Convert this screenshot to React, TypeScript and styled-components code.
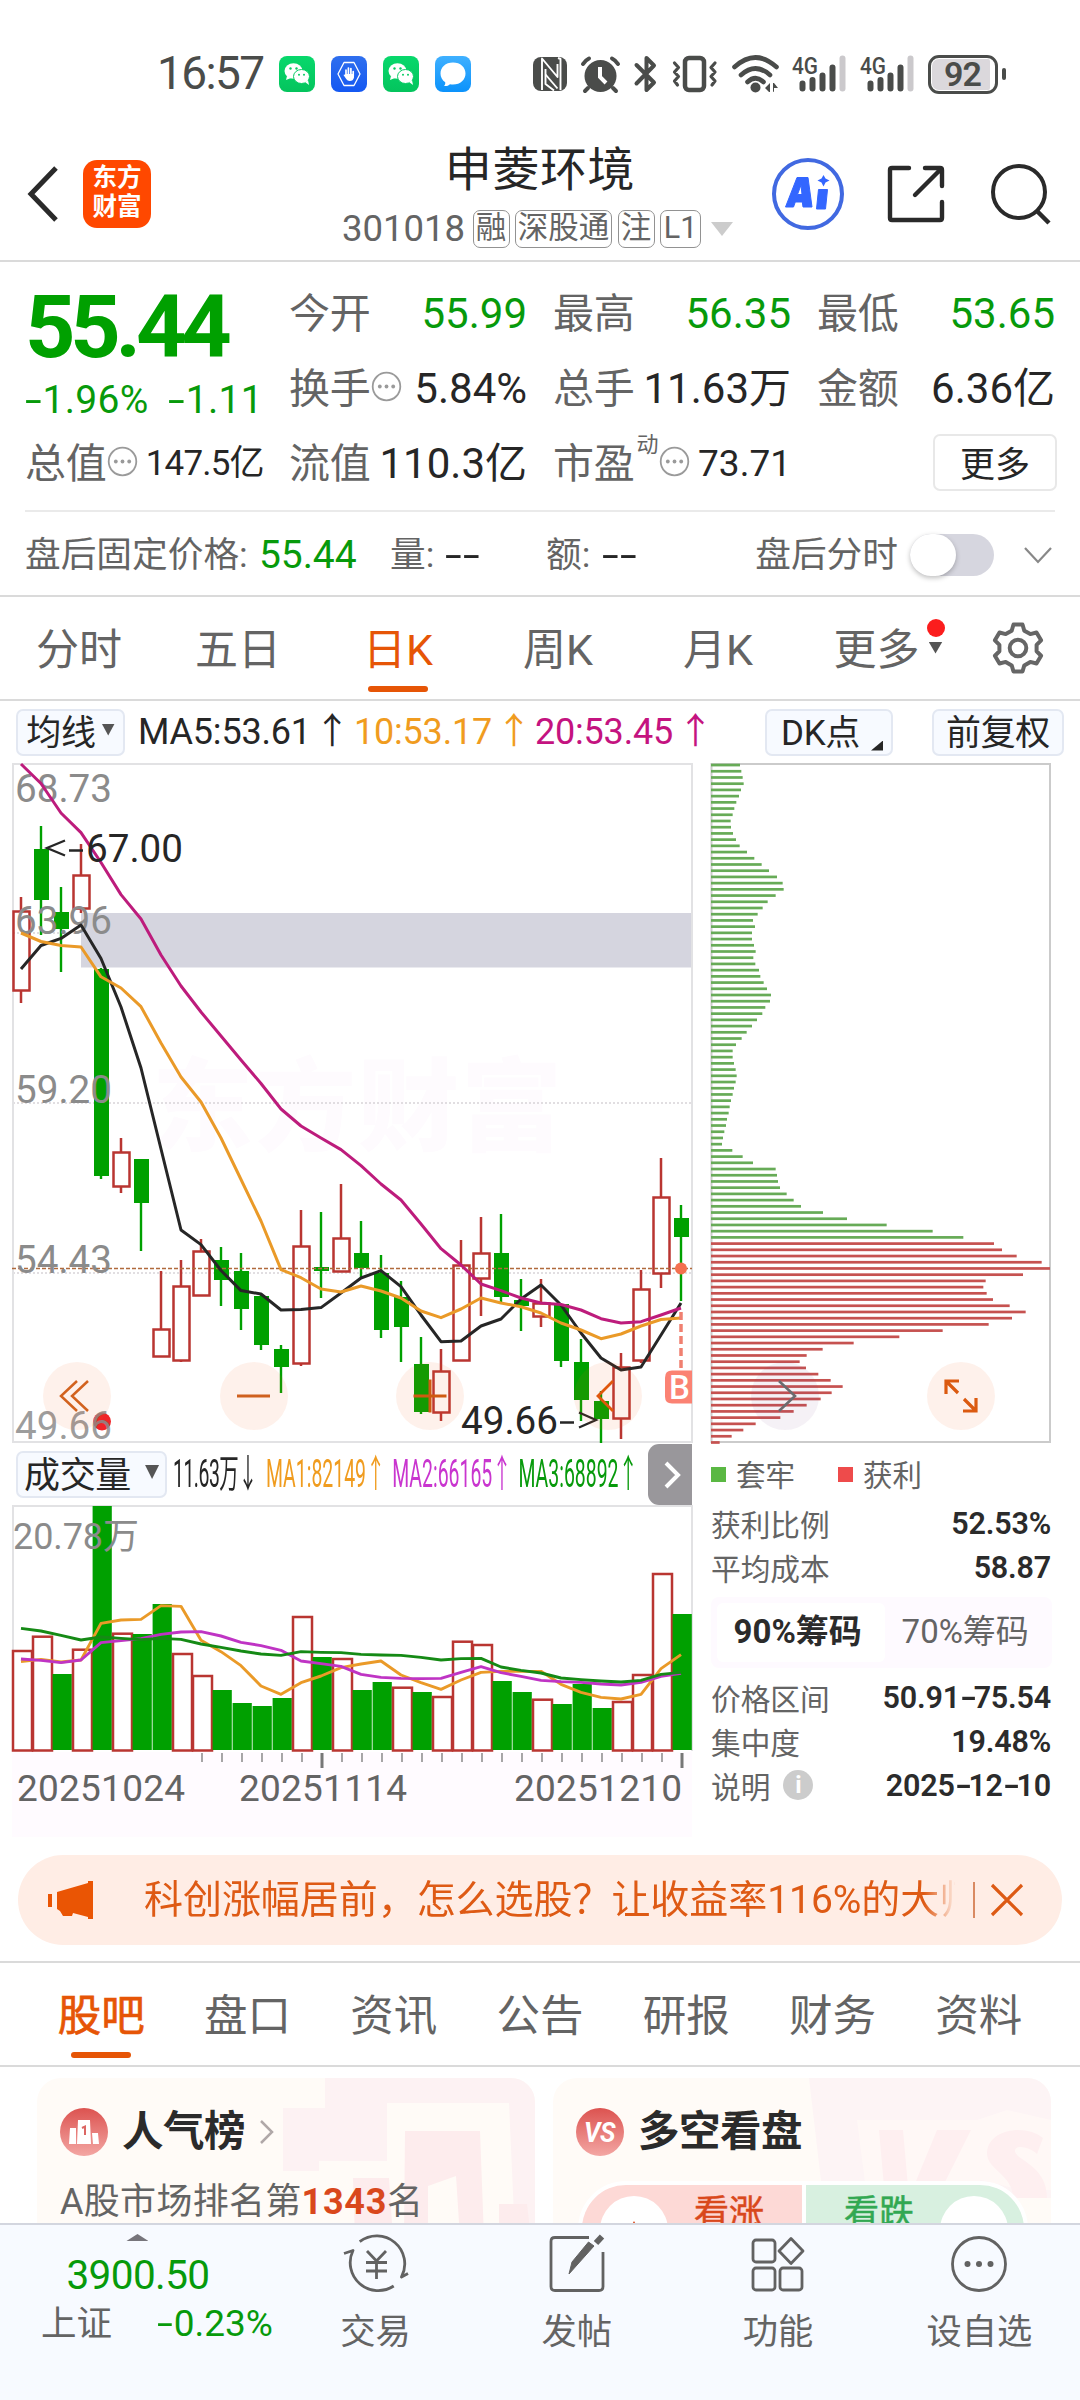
import React from "react";
import styled, { createGlobalStyle, css } from "styled-components";

const GREEN = "#079a0b";
const CANDLE_GREEN = "#00a000";
const CANDLE_RED = "#b93531";
const ORANGE = "#e65506";
const GRAY = "#646464";
const INK = "#262626";
const FONT = `Roboto, "Noto Sans CJK SC", sans-serif`;

const Global = createGlobalStyle`
  * { box-sizing: border-box; }
  body { margin: 0; background: #fff; }
  svg { display: block; flex: none; overflow: visible; }
`;

const Page = styled.main`
  width: 1080px;
  height: 2400px;
  overflow: hidden;
  display: flex;
  flex-direction: column;
  background: #fff;
  color: ${INK};
  font-family: ${FONT};
  white-space: nowrap;
`;

const Text = styled.span<{ $size: number; $color?: string; $weight?: number; $ls?: number; $ml?: number; $w?: number }>`
  flex: none;
  font-size: ${(p) => p.$size}px;
  line-height: 1.2;
  color: ${(p) => p.$color ?? INK};
  font-weight: ${(p) => p.$weight ?? 400};
  letter-spacing: ${(p) => p.$ls ?? 0}px;
  margin-left: ${(p) => p.$ml ?? 0}px;
  ${(p) => p.$w !== undefined && css`width: ${p.$w}px;`}
`;

/* a hyphen stretched to the width of a digit's minus sign */
const Dash = styled.span`
  display: inline-block;
  width: 0.45em;
  letter-spacing: 0;
  transform: scaleX(1.55);
  transform-origin: 0 50%;
`;

/* ---------- status bar ---------- */

const StatusBar = styled.div`
  height: 126px;
  flex: none;
  display: flex;
  align-items: center;
  padding: 22px 0 0 157px;
`;

const AppIcons = styled.div`
  display: flex;
  gap: 16px;
  margin-left: 10px;
`;

const AppIcon = styled.div<{ $bg: string }>`
  width: 36px;
  height: 36px;
  border-radius: 8px;
  background: ${(p) => p.$bg};
`;

const SystemIcons = styled.div`
  display: flex;
  align-items: center;
  margin-left: 62px;
`;

const SysSlot = styled.div<{ $ml: number }>`
  margin-left: ${(p) => p.$ml}px;
`;

const Battery = styled.div`
  width: 70px;
  height: 39px;
  margin-left: 14px;
  border: 3px solid #4a4c4a;
  border-radius: 11px;
  padding: 1px 5px 1px 1px;
  background: #fff;
`;

const BatteryFill = styled.div`
  height: 100%;
  border-radius: 7px 2px 2px 7px;
  background: #dbd8dc;
  display: flex;
  align-items: center;
  justify-content: center;
  padding-left: 3px;
`;

const BatteryTip = styled.div`
  width: 4px;
  height: 12px;
  margin-left: 4px;
  border-radius: 2px;
  background: #4a4c4a;
`;

const WeChat = () => (
  <AppIcon $bg="linear-gradient(#08d86c,#04c45d)">
    <svg width="36" height="36" viewBox="0 0 36 36">
      <ellipse cx="14.5" cy="15" rx="9" ry="7.8" fill="#fff" />
      <path d="M8 20l-1 4 5-2z" fill="#fff" />
      <ellipse cx="22.5" cy="20.5" rx="8" ry="7" fill="#fff" stroke="#06cc64" strokeWidth="1" />
      <path d="M26 26l4 3-1-5z" fill="#fff" />
      <g fill="#06cc64">
        <circle cx="11.5" cy="12.5" r="1.2" />
        <circle cx="17.5" cy="12.5" r="1.2" />
        <circle cx="20" cy="18.8" r="1" />
        <circle cx="25" cy="18.8" r="1" />
      </g>
    </svg>
  </AppIcon>
);

const HandApp = () => (
  <AppIcon $bg="linear-gradient(#2f6fee,#1458f2)">
    <svg width="36" height="36" viewBox="0 0 36 36">
      <path d="M13 6.500h10l6 11.500-6 11.500h-10L7 18z" fill="none" stroke="#fff" strokeWidth="1.300" strokeLinejoin="round" />
      <path d="M15 20v-6M17.400 19v-7M19.900 19v-6.500M22.200 20v-4.500" stroke="#fff" strokeWidth="1.700" strokeLinecap="round" />
      <path d="M14.200 18h8.800v3.500q-.8 3.500-4.300 3.500-2.300 0-3.500-2l-2.700-4q.7-1.200 2 .3z" fill="#fff" />
    </svg>
  </AppIcon>
);

const BubbleApp = () => (
  <AppIcon $bg="linear-gradient(#3fb0ff,#0b92fb)">
    <svg width="36" height="36" viewBox="0 0 36 36">
      <path d="M18 6.500c7.500 0 12.500 4.800 12.500 11S25.500 28.500 18 28.500c-1 0-2 0-3-.3-1.500 1.500-3.500 2-6 1.800 1-1 1.500-2.300 1.200-3.800C7 24 5.500 21 5.500 17.500c0-6.200 5-11 12.500-11z" fill="#fff" />
    </svg>
  </AppIcon>
);

const SYS = "#4a4c4a";

const Signal = () => (
  <svg width="54" height="38" viewBox="0 0 54 38">
    <text x="0" y="18.500" fontFamily="Roboto, sans-serif" fontSize="23.500" fontWeight="500" fill={SYS} textLength="26" lengthAdjust="spacingAndGlyphs">4G</text>
    <g stroke={SYS} strokeWidth="6" strokeLinecap="round">
      <path d="M10.500 28.500v5M20.500 25v8.500M30.500 20.500v13M40.500 12.500v21" />
      <path d="M50.500 3.500v30" stroke="#cbc9cc" />
    </g>
  </svg>
);

const StatusRow = () => (
  <StatusBar>
    <Text $size={46} $color={SYS} $ls={-1.6} $w={112}>16:57</Text>
    <AppIcons>
      <WeChat />
      <HandApp />
      <WeChat />
      <BubbleApp />
    </AppIcons>
    <SystemIcons>
      <svg width="34" height="34" viewBox="0 0 34 34">
        <rect width="34" height="34" rx="8" fill={SYS} />
        <path d="M9 33V1.500L24.500 20V7M12.500 12V27L21 33.500M27.500 33V2L25 1" stroke="#fff" strokeWidth="1.900" fill="none" strokeLinejoin="round" />
        <path d="M12.500 17.500l12 14" stroke="#fff" strokeWidth="1.900" />
      </svg>
      <SysSlot $ml={14}>
        <svg width="39" height="37" viewBox="0 0 39 37">
          <circle cx="19.500" cy="20" r="16" fill={SYS} />
          <path d="M2 8Q4 4.500 8 2.500M37 8q-2-3.500-6-5.500M7 32l-3 3M32 32l3 3" stroke={SYS} strokeWidth="4" strokeLinecap="round" fill="none" />
          <path d="M19 11v10l6 6" stroke="#fff" strokeWidth="4" fill="none" />
        </svg>
      </SysSlot>
      <SysSlot $ml={14}>
        <svg width="24" height="38" viewBox="0 0 24 38">
          <path d="M2.500 10L20 27.500 12.500 35V3L20 10.500 2.500 28.500" stroke={SYS} strokeWidth="4" fill="none" strokeLinecap="round" strokeLinejoin="round" />
        </svg>
      </SysSlot>
      <SysSlot $ml={14}>
        <svg width="46" height="38" viewBox="0 0 46 38">
          <rect x="13" y="3" width="19" height="32" rx="4" fill="none" stroke={SYS} strokeWidth="4.500" />
          <path d="M2.500 8l4 4.500-4 4.500 4 4.500-4 4.500 3 4M43 8l-4 4.500 4 4.500-4 4.500 4 4.500-3 4" fill="none" stroke={SYS} strokeWidth="3.200" strokeLinecap="round" strokeLinejoin="round" />
        </svg>
      </SysSlot>
      <SysSlot $ml={14}>
        <svg width="48" height="38" viewBox="0 0 48 38">
          <path d="M2.500 12q21-19 42 0M9 20q14.500-13 29 0M15.500 27q8-7.500 16 0" fill="none" stroke={SYS} strokeWidth="4.600" strokeLinecap="round" />
          <circle cx="23.500" cy="32.500" r="5" fill={SYS} />
          <path d="M38 28v9h-1l-4-4zM41 28v9l1-.5V33h4l-4-5z" fill={SYS} />
        </svg>
      </SysSlot>
      <SysSlot $ml={12}><Signal /></SysSlot>
      <SysSlot $ml={14}><Signal /></SysSlot>
      <Battery>
        <BatteryFill>
          <Text $size={34} $color={SYS} $weight={600} $ls={-1}>92</Text>
        </BatteryFill>
      </Battery>
      <BatteryTip />
    </SystemIcons>
  </StatusBar>
);

/* ---------- header ---------- */

const Header = styled.header`
  height: 136px;
  flex: none;
  display: flex;
  padding: 2px 29px 0 27px;
  border-bottom: 2px solid #dadada;
  align-items: center;
`;

const BrandLogo = styled.div`
  width: 68px;
  height: 68px;
  margin-left: 24px;
  border-radius: 14px;
  background: #ff4800;
  color: #fff;
  font-size: 24.500px;
  font-weight: 700;
  line-height: 29px;
  text-align: center;
  padding-top: 3px;
`;

const TitleBlock = styled.div`
  flex: 1;
  margin-left: 162px;
  height: 100%;
  padding-top: 11px;
`;

const Title = styled.h1`
  margin: 0;
  width: 454px;
  text-align: center;
  font-size: 47px;
  letter-spacing: 0.600px;
  line-height: 62px;
  font-weight: 400;
`;

const CodeRow = styled.div`
  display: flex;
  align-items: center;
  margin-top: 6px;
  padding-left: 29px;
`;

const Tag = styled.span<{ $w: number }>`
  width: ${(p) => p.$w}px;
  height: 38px;
  margin-left: 5.500px;
  border: 1.500px solid #929292;
  border-radius: 7px;
  color: ${GRAY};
  font-size: 30.500px;
  line-height: 34px;
  text-align: center;
`;

const Triangle = styled.i<{ $w: number; $h: number; $color: string; $ml?: number; $up?: boolean }>`
  flex: none;
  width: ${(p) => p.$w}px;
  height: ${(p) => p.$h}px;
  margin-left: ${(p) => p.$ml ?? 0}px;
  background: ${(p) => p.$color};
  clip-path: ${(p) => (p.$up ? "polygon(50% 0,100% 100%,0 100%)" : "polygon(0 0,100% 0,50% 100%)")};
`;

const HeaderIcons = styled.div`
  display: flex;
  align-items: center;
`;

const IconSlot = styled.div<{ $ml: number }>`
  margin-left: ${(p) => p.$ml}px;
`;

const TopHeader = () => (
  <Header>
    <svg width="32" height="58" viewBox="0 0 32 58">
      <path d="M29 3L4 29l25 26" fill="none" stroke="#2a2a2a" strokeWidth="5" />
    </svg>
    <BrandLogo>东方<br />财富</BrandLogo>
    <TitleBlock>
      <Title>申菱环境</Title>
      <CodeRow>
        <Text $size={36.5} $color={GRAY} $w={125}>301018</Text>
        <Tag $w={37}>融</Tag>
        <Tag $w={97}>深股通</Tag>
        <Tag $w={37}>注</Tag>
        <Tag $w={41}>L1</Tag>
        <Triangle $w={22} $h={14} $color="#ccc" $ml={10} />
      </CodeRow>
    </TitleBlock>
    <HeaderIcons>
      <svg width="72" height="72" viewBox="0 0 72 72">
        <circle cx="36" cy="36" r="34" fill="#fff" stroke="#4169e1" strokeWidth="4" />
        <path d="M13.500 49L25 19.500h11L40 49h-9l-.7-5h-7L21.500 49zM25.500 36.500h4.500L29 27z" fill="#3366ff" stroke="#3366ff" strokeLinejoin="round" />
        <path d="M46.500 31.500h9L53.500 51h-9z" fill="#3366ff" stroke="#3366ff" strokeLinejoin="round" />
        <path d="M51.500 17l2 3.500 4 2-4 2-2 4-2-4-4-2 4-2z" fill="#3366ff" />
      </svg>
      <IconSlot $ml={43}>
        <svg width="58" height="58" viewBox="0 0 58 58">
          <path d="M22 3H5Q3 3 3 5V53Q3 55 5 55H53Q55 55 55 53V37M38 3H53Q55 3 55 5V21M54 4L28 30" fill="none" stroke="#2a2a2a" strokeWidth="4.400" strokeLinecap="round" />
        </svg>
      </IconSlot>
      <IconSlot $ml={46}>
        <svg width="60" height="60" viewBox="0 0 60 60">
          <circle cx="28" cy="28" r="26" fill="none" stroke="#2a2a2a" strokeWidth="4" />
          <path d="M46 47l12 12" stroke="#2a2a2a" strokeWidth="4.500" />
        </svg>
      </IconSlot>
    </HeaderIcons>
  </Header>
);

/* ---------- quote ---------- */

const Quote = styled.section`
  flex: none;
  height: 250px;
  margin: 0 25px;
  padding-top: 14px;
  border-bottom: 2px solid #eaeaea;
  display: grid;
  grid-template-columns: repeat(4, 238px);
  grid-template-rows: repeat(3, 75px);
  column-gap: 26px;
`;

const PriceCell = styled.div`
  grid-row: span 2;
  display: flex;
  flex-direction: column;
`;

const Price = styled.div`
  height: 99px;
  line-height: 102px;
  font-size: 88px;
  font-weight: 700;
  letter-spacing: -5.200px;
  color: ${CANDLE_GREEN};
`;

const ChangeRow = styled.div`
  height: 54px;
  display: flex;
  align-items: center;
  justify-content: space-between;
`;

const Cell = styled.div`
  display: flex;
  align-items: center;
  color: ${GRAY};
  font-size: 41px;
  letter-spacing: -0.300px;
  line-height: 50px;
`;

const CellValue = styled.span<{ $color?: string; $size?: number; $ls?: number }>`
  margin-left: auto;
  color: ${(p) => p.$color ?? INK};
  font-size: ${(p) => p.$size ?? 42}px;
  letter-spacing: ${(p) => p.$ls ?? 0}px;
  margin-right: ${(p) => p.$ls ?? 0}px;
`;

const Sup = styled.span`
  align-self: flex-start;
  margin-left: 2px;
  font-size: 22px;
  line-height: 26px;
  padding-top: 6px;
`;

const MoreButton = styled.button`
  justify-self: end;
  align-self: center;
  width: 124px;
  height: 57px;
  margin: -3px -2px 0 0;
  padding: 0 0 7px;
  border: 2px solid #e8e8e8;
  border-radius: 7px;
  background: #fff;
  color: ${INK};
  font: 35px ${FONT};
`;

const HintBox = styled.span`
  margin: -5px 0 0 1px;
`;

const Hint = () => (
  <HintBox>
    <svg width="31" height="31" viewBox="0 0 31 31">
      <circle cx="15.500" cy="15.500" r="13.800" fill="none" stroke="#9a9a9a" strokeWidth="1.800" />
      <g fill="#9a9a9a">
        <circle cx="8.800" cy="15.500" r="1.900" />
        <circle cx="15.500" cy="15.500" r="1.900" />
        <circle cx="22.200" cy="15.500" r="1.900" />
      </g>
    </svg>
  </HintBox>
);

const QuotePanel = () => (
  <Quote>
    <PriceCell>
      <Price>55.44</Price>
      <ChangeRow>
        <Text $size={39} $color={GREEN} $ls={0.3}><Dash>-</Dash>1.96%</Text>
        <Text $size={39} $color={GREEN} $ls={0.3}><Dash>-</Dash>1.11</Text>
      </ChangeRow>
    </PriceCell>
    <Cell>今开<CellValue $color={GREEN}>55.99</CellValue></Cell>
    <Cell>最高<CellValue $color={GREEN}>56.35</CellValue></Cell>
    <Cell>最低<CellValue $color={GREEN}>53.65</CellValue></Cell>
    <Cell>换手<Hint /><CellValue>5.84%</CellValue></Cell>
    <Cell>总手<CellValue>11.63万</CellValue></Cell>
    <Cell>金额<CellValue>6.36亿</CellValue></Cell>
    <Cell>总值<Hint /><CellValue $size={35} $ls={-0.8}>147.5亿</CellValue></Cell>
    <Cell>流值<CellValue>110.3亿</CellValue></Cell>
    <Cell>市盈<Sup>动</Sup><Hint /><CellValue $size={37}>73.71</CellValue></Cell>
    <MoreButton>更多</MoreButton>
  </Quote>
);

const AfterHours = styled.section`
  flex: none;
  height: 85px;
  padding: 3px 28px 0 25px;
  display: flex;
  align-items: center;
  border-bottom: 2px solid #dadada;
`;

const Switch = styled.div`
  width: 84px;
  height: 42px;
  margin-left: 12px;
  border-radius: 21px;
  background: #d6d6df;
`;

const Knob = styled.div`
  width: 46px;
  height: 42px;
  border-radius: 23px;
  background: #fff;
  box-shadow: 0 2px 5px rgba(0, 0, 0, 0.25);
`;

const Spacer = styled.div`
  flex: 1;
`;

const AfterHoursRow = () => (
  <AfterHours>
    <Text $size={35.7} $color={GRAY} $w={234}>盘后固定价格:</Text>
    <Text $size={39} $color={GREEN} $ls={-0.1} $w={131}>55.44</Text>
    <Text $size={35.7} $color={GRAY} $w={55}>量:</Text>
    <Text $size={39} $w={101}><Dash>-</Dash><Dash>-</Dash></Text>
    <Text $size={35.7} $color={GRAY} $w={56}>额:</Text>
    <Text $size={39}><Dash>-</Dash><Dash>-</Dash></Text>
    <Spacer />
    <Text $size={35.7} $color={GRAY}>盘后分时</Text>
    <Switch><Knob /></Switch>
    <IconSlot $ml={30}>
      <svg width="28" height="18" viewBox="0 0 28 18">
        <path d="M1 2l13 14L27 2" fill="none" stroke="#888" strokeWidth="2.200" />
      </svg>
    </IconSlot>
  </AfterHours>
);

/* ---------- period tabs ---------- */

const PeriodTabs = styled.nav`
  flex: none;
  height: 104px;
  padding: 0 36px 0 0;
  display: flex;
  align-items: center;
  border-bottom: 2px solid #dadada;
`;

const PeriodTab = styled.div<{ $active?: boolean; $w: number }>`
  position: relative;
  width: ${(p) => p.$w}px;
  height: 100%;
  padding-bottom: 5px;
  display: flex;
  align-items: center;
  justify-content: center;
  font-size: 43px;
  color: ${(p) => (p.$active ? ORANGE : GRAY)};
  ${(p) => p.$active && css`
    &::after {
      content: "";
      position: absolute;
      left: 50%;
      bottom: 7px;
      width: 60px;
      margin-left: -30px;
      height: 6px;
      border-radius: 3px;
      background: ${ORANGE};
    }
  `}
`;

const MoreMark = styled.span`
  display: flex;
  flex-direction: column;
  align-items: center;
  gap: 5px;
  margin: -19px 0 0 7px;
`;

const RedDot = styled.i`
  width: 18px;
  height: 18px;
  border-radius: 9px;
  background: #fb1d1d;
`;

const GearSlot = styled.div`
  margin-left: auto;
`;

const Gear = () => (
  <GearSlot>
    <svg width="52" height="52" viewBox="0 0 52 52">
      <path d="M21.500 2.500h9l1.800 6.200 6 3.400 6.200-1.600 4.600 7.800-4.500 4.500v6.500l4.500 4.400-4.600 7.800-6.200-1.600-6 3.500-1.800 6.100h-9l-1.800-6.100-6-3.500-6.200 1.600L2.900 33.700l4.500-4.400v-6.500l-4.500-4.500 4.600-7.800 6.200 1.600 6-3.400z" fill="none" stroke="#666" strokeWidth="4" strokeLinejoin="round" />
      <circle cx="26" cy="26" r="8.300" fill="none" stroke="#666" strokeWidth="4" />
    </svg>
  </GearSlot>
);

const Periods = () => (
  <PeriodTabs>
    <PeriodTab $w={158}>分时</PeriodTab>
    <PeriodTab $w={160}>五日</PeriodTab>
    <PeriodTab $w={160} $active>日K</PeriodTab>
    <PeriodTab $w={160}>周K</PeriodTab>
    <PeriodTab $w={160}>月K</PeriodTab>
    <PeriodTab $w={182}>
      更多
      <MoreMark>
        <RedDot />
        <Triangle $w={14} $h={12} $color="#555" />
      </MoreMark>
    </PeriodTab>
    <Gear />
  </PeriodTabs>
);

/* ---------- moving average bar ---------- */

const MaBar = styled.div`
  flex: none;
  height: 62px;
  padding: 0 16px;
  display: flex;
  align-items: center;
`;

const Chip = styled.button<{ $w: number; $ml?: number; $size?: number }>`
  flex: none;
  width: ${(p) => p.$w}px;
  height: 47px;
  margin-left: ${(p) => p.$ml ?? 0}px;
  padding: 0 0 5px;
  display: flex;
  align-items: center;
  justify-content: center;
  border: 2px solid #e3e8f2;
  border-radius: 7px;
  background: #f7faff;
  color: ${INK};
  font: ${(p) => p.$size ?? 35}px ${FONT};
  letter-spacing: -0.300px;
`;

const Corner = styled.i`
  align-self: flex-end;
  width: 12px;
  height: 10px;
  margin: 0 -6px -2px 11px;
  background: ${INK};
  clip-path: polygon(100% 0, 100% 100%, 0 100%);
`;

const Arrow = styled.span<{ $w?: number }>`
  display: inline-block;
  width: ${(p) => p.$w ?? 40}px;
  text-align: center;
  letter-spacing: 0;
  font-family: "Noto Sans CJK SC", sans-serif;
  line-height: 1;
`;

const MaLegend = () => (
  <MaBar>
    <Chip $w={109}>均线<Triangle $w={13} $h={12} $color="#555" $ml={6} /></Chip>
    <Text $size={36} $w={216} $ml={13} $ls={-0.2}>MA5:53.61<Arrow $w={43}>↑</Arrow></Text>
    <Text $size={36} $color="#f09c1f" $w={181} $ls={-0.2}>10:53.17<Arrow $w={44}>↑</Arrow></Text>
    <Text $size={36} $color="#c41380" $w={181} $ls={-0.2}>20:53.45<Arrow $w={45}>↑</Arrow></Text>
    <Spacer />
    <Chip $w={128}>DK点<Corner /></Chip>
    <Chip $w={132} $ml={39}>前复权</Chip>
  </MaBar>
);

/* ---------- charts ---------- */

const ChartArea = styled.section`
  flex: none;
  height: 1074px;
  padding-left: 12px;
  display: flex;
  gap: 17px;
`;

const ChartColumn = styled.div`
  width: 682px;
  position: relative;
`;

const SideColumn = styled.div`
  width: 341px;
  position: relative;
`;

const ToolButton = styled.button<{ $cx: number; $gray?: boolean }>`
  position: absolute;
  top: 599px;
  left: ${(p) => p.$cx - 34}px;
  width: 68px;
  height: 68px;
  padding: 0;
  display: flex;
  align-items: center;
  justify-content: center;
  border: 0;
  border-radius: 34px;
  background: ${(p) => (p.$gray ? "rgba(120,70,140,0.075)" : "rgba(240,90,20,0.085)")};
`;

// x position comes from the index; [high, bodyTop, bodyBottom, low, rising]
const CANDLES: [number, number, number, number, number][] = [
  [897, 911, 990, 1003, 1], [826, 849, 900, 935, 0], [887, 912, 929, 972, 0], [844, 875, 908, 913, 1],
  [968, 969, 1176, 1179, 0], [1138, 1152, 1186, 1193, 1], [1159, 1159, 1203, 1251, 0], [1271, 1329, 1356, 1356, 1],
  [1260, 1286, 1360, 1362, 1], [1239, 1251, 1295, 1295, 1], [1247, 1260, 1280, 1306, 0], [1253, 1271, 1309, 1330, 0],
  [1295, 1296, 1345, 1350, 0], [1345, 1349, 1367, 1393, 0], [1210, 1246, 1363, 1366, 1], [1212, 1267, 1271, 1298, 0],
  [1184, 1238, 1271, 1271, 1], [1221, 1253, 1268, 1278, 0], [1255, 1273, 1330, 1338, 0], [1281, 1297, 1327, 1362, 0],
  [1337, 1364, 1412, 1414, 0], [1349, 1371, 1412, 1421, 1], [1240, 1265, 1360, 1360, 1], [1217, 1253, 1278, 1316, 1],
  [1214, 1253, 1297, 1302, 0], [1279, 1300, 1306, 1331, 0], [1279, 1303, 1316, 1327, 1], [1304, 1304, 1361, 1367, 0],
  [1339, 1362, 1400, 1421, 0], [1391, 1401, 1419, 1443, 0], [1353, 1367, 1418, 1439, 1], [1270, 1289, 1360, 1363, 1],
  [1158, 1197, 1273, 1288, 1], [1205, 1218, 1237, 1301, 0],
];
const MA5 = [969, 945.5, 938.4, 925, 958.5, 1007, 1068, 1149, 1230, 1244.6, 1270.5, 1290.6, 1294, 1310, 1309.5, 1307.6, 1293, 1278, 1270.7, 1286.7, 1315, 1341.7, 1341, 1326, 1319, 1299, 1285, 1305, 1333, 1358, 1370, 1367, 1335, 1303];
const MA10 = [933, 941.5, 945.5, 947, 976.8, 988, 1006.7, 1043, 1077, 1102, 1138, 1179.5, 1221, 1269.6, 1277.7, 1289, 1292, 1286, 1291, 1298, 1311, 1317.7, 1309, 1298, 1303, 1306.7, 1313, 1323, 1330, 1338.7, 1334, 1326, 1319.5, 1318];
const MA20 = [764, 783.5, 813, 832.6, 862.5, 894.6, 919, 955, 986, 1012, 1036, 1060, 1083.5, 1109, 1126, 1138, 1149.6, 1165.7, 1184, 1200, 1224, 1248.7, 1265, 1284, 1290.7, 1298, 1303, 1304.5, 1310, 1318.7, 1323, 1321.7, 1315, 1308];

const xAt = (i: number) => 21 + i * 20;
const line = (v: number[]) => v.map((y, i) => `${xAt(i)},${y}`).join(" ");
const LABELS: [string, number][] = [["68.73", 802], ["63.96", 934], ["59.20", 1103], ["54.43", 1273]];

const CandleChart = () => (
  <svg width="682" height="681" viewBox="12 763 682 681">
    <text x="152" y="1143" fontFamily={FONT} fontSize="101" fontWeight="900" fill="#fefbfe" textLength="410">东方财富</text>
    <g stroke="#d8d4d8" strokeWidth="1.300" strokeDasharray="2 2">
      <path d="M13 933H692M13 1103H692M13 1273H692" />
    </g>
    <rect x="81" y="913" width="611" height="54.500" fill="#d5d5df" />
    <rect x="13" y="764" width="679" height="678" fill="none" stroke="#e2e2e4" strokeWidth="2" />
    {CANDLES.map(([hi, top, bottom, low, up], i) => {
      const x = xAt(i);
      return up ? (
        <g key={i} stroke={CANDLE_RED} strokeWidth="2.500" fill="none">
          <path d={`M${x} ${hi}V${top}M${x} ${bottom}V${low}`} />
          <rect x={x - 7.5} y={top + 0.5} width="16" height={bottom - top} />
        </g>
      ) : (
        <g key={i} fill={CANDLE_GREEN}>
          <rect x={x - 1.2} y={hi} width="2.400" height={low - hi} />
          <rect x={x - 7} y={top} width="15" height={bottom - top} />
        </g>
      );
    })}
    <path d="M12 1268.500H692" stroke="#b06a3c" strokeWidth="1.300" strokeDasharray="4 2" />
    <g fontFamily={FONT} fontSize="39" fill="#8b8b8b">
      {LABELS.map(([t, y]) => (
        <text key={t} x="15" y={y} textLength="97" lengthAdjust="spacingAndGlyphs">{t}</text>
      ))}
    </g>
    <g fill="none" strokeWidth="3" strokeLinejoin="round">
      <polyline points={line(MA5)} stroke="#262626" />
      <polyline points={line(MA10)} stroke="#ea9a28" />
      <polyline points={line(MA20)} stroke="#bd1c7c" />
    </g>
    <g fontFamily={FONT} fontSize="39" fill={INK}>
      <text x="86" y="861.500" textLength="97" lengthAdjust="spacingAndGlyphs">67.00</text>
      <text x="461" y="1434" textLength="97" lengthAdjust="spacingAndGlyphs">49.66</text>
    </g>
    <g stroke={INK} strokeWidth="2.300" fill="none">
      <path d="M65 840.500L47 848l18 7.500M69 850.500h14" />
      <path d="M560 1422.500h14M579 1412.500l17 7.500-17 7.500" />
    </g>
    <path d="M681 1312v56" stroke="#f08070" strokeWidth="3.500" strokeDasharray="8 4" />
    <circle cx="681" cy="1268.500" r="6" fill="#f4704f" />
    <path d="M692 1370.500h-20q-7 0-7 7v19q0 7 7 7h20z" fill="#fb8273" />
    <text x="669" y="1399" fontFamily={FONT} fontSize="33" fontWeight="500" fill="#fff">B</text>
    <circle cx="102" cy="1421.500" r="9" fill="#f02428" />
    <text x="15" y="1438.500" fontFamily={FONT} fontSize="39" fill="#8b8b8b" fillOpacity="0.85" textLength="97" lengthAdjust="spacingAndGlyphs">49.66</text>
  </svg>
);

const CHIPS = [
  150, 154, 158, 161, 153, 147, 139, 133, 128, 122, 123, 129, 138, 149, 171, 193, 215, 237, 261, 278, 281, 257, 233, 218, 203, 189, 195, 186, 186, 192,
  197, 190, 196, 207, 211, 221, 231, 243, 240, 226, 217, 201, 186, 170, 155, 138, 128, 128, 132, 137, 140, 137, 132, 128, 123, 119, 116, 111, 108, 103,
  99, 96, 127, 158, 189, 257, 261, 264, 270, 290, 311, 333, 399, 471, 590, 728, 820, 912, 936, 980, 1055, 1080, 999, 887, 880, 890, 909, 959, 1007, 966,
  896, 758, 628, 491, 398, 350, 329, 348, 385, 422, 458, 425, 392, 350, 311, 271, 197, 160, 125, 89,
];
const FIRST_PROFIT = 77;

const ChipChart = () => (
  <svg width="341" height="681" viewBox="711 763 341 681">
    <rect x="711.500" y="764" width="338.500" height="678" fill="none" stroke="#cbcbcb" strokeWidth="2" />
    {CHIPS.map((w, i) => (
      <rect key={i} x="711" y={763.7 + i * 6.215} width={(w - 63) / 3} height="2.700" fill={i < FIRST_PROFIT ? "#67ab57" : "#c65250"} />
    ))}
  </svg>
);

const VolumeHeader = styled.div`
  height: 61px;
  display: flex;
  align-items: center;
  padding-left: 4px;
`;

const VolumeStats = styled.div`
  width: 474px;
  margin-left: 6px;
`;

const Condensed = styled.div`
  width: 940px;
  display: flex;
  transform: scaleX(0.505);
  transform-origin: 0 50%;
`;

const NextButton = styled.button`
  width: 44px;
  height: 61px;
  margin-left: auto;
  margin-right: 2px;
  padding: 0 0 0 14px;
  border: 0;
  border-radius: 11px 0 0 11px;
  background: #99979b;
`;

const VOLUMES: [number, number][] = [
  [1650, 1], [1635.7, 1], [1674, 0], [1648.7, 1], [1506, 0], [1632.7, 1], [1634, 0], [1604, 0], [1653, 1], [1675, 1], [1690, 0], [1703, 0],
  [1706, 0], [1698, 0], [1616, 1], [1657, 0], [1658, 1], [1690, 0], [1682, 0], [1686.7, 1], [1692, 0], [1696, 1], [1640.7, 1], [1644, 1],
  [1681, 0], [1692, 0], [1698.7, 1], [1704, 0], [1684, 0], [1708, 0], [1701, 1], [1674, 1], [1573, 1], [1614, 0],
];
const V1 = [695, 688, 696, 690, 580, 570, 568, 527, 529, 631, 665, 707, 768, 793, 758, 738, 713, 702, 693, 735, 758, 778, 750, 727, 724, 724, 724, 763, 787, 802, 807, 793, 716, 674];
const V2 = [687, 691, 698, 690, 638, 632, 626, 613, 606, 605, 618, 637, 647, 661, 693, 701, 709, 733, 742, 745, 746, 745, 727, 710, 728, 739, 751, 755, 757, 762, 765, 757, 739, 730];
const V3 = [595, 603, 616, 630, 621, 625, 629, 625, 628, 642, 652, 663, 672, 676, 665, 667, 668, 673, 675, 676, 682, 690, 686, 685, 711, 721, 729, 744, 749, 753, 756, 751, 733, 727];
const volLine = (v: number[]) => line(v.map((n) => 1430 + n / 3));

const VolumeChart = () => (
  <svg width="682" height="332" viewBox="12 1505 682 332">
    <rect x="12" y="1752" width="680" height="85" fill="#fffbff" />
    <path d="M13 1751V1506H692V1751" fill="none" stroke="#e2e2e4" strokeWidth="2" />
    {VOLUMES.map(([y, up], i) => {
      const x = xAt(i) - 9;
      return up ? (
        <rect key={i} x={x + 1} y={y + 1} width="19" height={1749.5 - y} fill="#fff" stroke={CANDLE_RED} strokeWidth="2.500" />
      ) : (
        <rect key={i} x={x + 0.6} y={y} width="19.200" height={1750 - y} fill={CANDLE_GREEN} />
      );
    })}
    <text x="13" y="1549" fontFamily={FONT} fontSize="36" fill="#8b8b8b" textLength="126">20.78万</text>
    <g fill="none" strokeWidth="2.900" strokeLinejoin="round">
      <polyline points={volLine(V1)} stroke="#ea9a28" />
      <polyline points={volLine(V2)} stroke="#bf34c4" />
      <polyline points={volLine(V3)} stroke="#158a15" />
    </g>
    {Array.from({ length: 25 }, (_, i) => {
      const major = i === 6 || i === 24;
      return <path key={i} d={`M${202 + i * 20} 1753V${major ? 1768 : 1762}`} stroke="#777" strokeWidth={major ? 3 : 1.3} />;
    })}
    <g fontFamily={FONT} fontSize="37" fill={GRAY}>
      <text x="17" y="1801" textLength="168">20251024</text>
      <text x="239" y="1801" textLength="168">20251114</text>
      <text x="514" y="1801" textLength="168">20251210</text>
    </g>
  </svg>
);

const Legend = styled.div`
  height: 57px;
  display: flex;
  align-items: center;
  color: ${GRAY};
  font-size: 29.500px;
`;

const Swatch = styled.i<{ $color: string; $ml?: number }>`
  width: 15px;
  height: 15px;
  margin: 3px 10px 0 ${(p) => p.$ml ?? 0}px;
  background: ${(p) => p.$color};
`;

const InfoRow = styled.div`
  height: 44px;
  display: flex;
  align-items: center;
  justify-content: space-between;
  color: ${GRAY};
  font-size: 29.700px;
`;

const InfoLabel = styled.span`
  display: flex;
  align-items: center;
  gap: 13px;
`;

const InfoValue = styled.span`
  font-weight: 600;
  font-size: 30.500px;
  letter-spacing: -0.200px;
  margin-right: 1px;
  color: #2b2b2b;
`;

const InfoIcon = styled.i`
  width: 30px;
  height: 30px;
  border-radius: 15px;
  background: #ccc;
  color: #fff;
  font-style: normal;
  font-weight: 700;
  font-size: 24px;
  line-height: 30px;
  text-align: center;
`;

const Segments = styled.div`
  height: 71px;
  margin: 8px 0 7px;
  padding: 6px;
  display: flex;
  border-radius: 8px;
  background: #fefaff;
`;

const Segment = styled.div<{ $on?: boolean }>`
  flex: 1;
  border-radius: 6px;
  background: ${(p) => (p.$on ? "#fff" : "transparent")};
  color: ${(p) => (p.$on ? "#2b2b2b" : GRAY)};
  font-weight: ${(p) => (p.$on ? 700 : 400)};
  font-size: 33px;
  line-height: 58px;
  text-align: center;
  padding-right: ${(p) => (p.$on ? 6 : 0)}px;
`;

const Charts = () => (
  <ChartArea>
    <ChartColumn>
      <CandleChart />
      <ToolButton $cx={64.7}>
        <svg width="32" height="34" viewBox="0 0 32 34"><path d="M16 2L0 17l16 15M27 2L11 17l16 15" fill="none" stroke="#d2621e" strokeWidth="2.500" /></svg>
      </ToolButton>
      <ToolButton $cx={241.6}>
        <svg width="33" height="4" viewBox="0 0 33 4"><path d="M0 2h33" stroke="#cf611f" strokeWidth="3" /></svg>
      </ToolButton>
      <ToolButton $cx={418.3}>
        <svg width="34" height="34" viewBox="0 0 34 34"><path d="M0.500 17h33M17 .5v33" stroke="#cf5a10" strokeWidth="3" /></svg>
      </ToolButton>
      <ToolButton $cx={596}>
        <svg width="34" height="34" viewBox="0 0 34 34"><path d="M22 2L7 17l15 15" fill="none" stroke="#e0570c" strokeWidth="2.800" /></svg>
      </ToolButton>
      <VolumeHeader>
        <Chip $w={151} $size={36}>成交量<Triangle $w={14} $h={14} $color="#555" $ml={14} /></Chip>
        <VolumeStats>
          <Condensed>
            <Text $size={38.5} $w={184} $ls={-1}>11.63万<Arrow $w={36}>↓</Arrow></Text>
            <Text $size={38.5} $color="#f09c1f" $w={250}>MA1:82149<Arrow $w={38}>↑</Arrow></Text>
            <Text $size={38.5} $color="#c935cf" $w={250}>MA2:66165<Arrow $w={38}>↑</Arrow></Text>
            <Text $size={38.5} $color={GREEN}>MA3:68892<Arrow $w={38}>↑</Arrow></Text>
          </Condensed>
        </VolumeStats>
        <NextButton>
          <svg width="20" height="30" viewBox="0 0 20 30"><path d="M4 3l12 12L4 27" fill="none" stroke="#fff" strokeWidth="4" /></svg>
        </NextButton>
      </VolumeHeader>
      <VolumeChart />
    </ChartColumn>
    <SideColumn>
      <ChipChart />
      <ToolButton $cx={73.7} $gray>
        <svg width="34" height="32" viewBox="0 0 34 32"><path d="M11 1l16 15-16 15" fill="none" stroke="#6b6b6f" strokeWidth="2.600" /></svg>
      </ToolButton>
      <ToolButton $cx={250.3}>
        <svg width="34" height="34" viewBox="0 0 34 34"><path d="M15 2H2v13M2 2l12 12M19 32h13V19M32 32L20 20" fill="none" stroke="#db5a10" strokeWidth="3.200" /></svg>
      </ToolButton>
      <Legend>
        <Swatch $color="#5ab843" />套牢
        <Swatch $color="#ee4b4b" $ml={43} />获利
      </Legend>
      <InfoRow>获利比例<InfoValue>52.53%</InfoValue></InfoRow>
      <InfoRow>平均成本<InfoValue>58.87</InfoValue></InfoRow>
      <Segments>
        <Segment $on>90%筹码</Segment>
        <Segment>70%筹码</Segment>
      </Segments>
      <InfoRow>价格区间<InfoValue>50.91<Dash>-</Dash>75.54</InfoValue></InfoRow>
      <InfoRow>集中度<InfoValue>19.48%</InfoValue></InfoRow>
      <InfoRow><InfoLabel>说明<InfoIcon>i</InfoIcon></InfoLabel><InfoValue>2025<Dash>-</Dash>12<Dash>-</Dash>10</InfoValue></InfoRow>
    </SideColumn>
  </ChartArea>
);

/* ---------- banner ---------- */

const Banner = styled.div`
  flex: none;
  height: 90px;
  margin: 18px 18px 16px;
  padding: 0 38px 0 29px;
  display: flex;
  align-items: center;
  border-radius: 45px;
  background: #ffede5;
`;

const BannerText = styled.div`
  width: 812px;
  margin-left: 49px;
  overflow: hidden;
  font-size: 39px;
  letter-spacing: -0.050px;
  line-height: 60px;
  padding-bottom: 1px;
  color: #de5a14;
  mask-image: linear-gradient(90deg, #000 780px, transparent 812px);
`;

const BannerRule = styled.i`
  width: 2px;
  height: 36px;
  margin: 0 15px 0 18px;
  background: #d98a62;
`;

const BannerRow = () => (
  <Banner>
    <svg width="48" height="40" viewBox="0 0 48 40">
      <path d="M1 14h4v13H1zM10 12L41 3V1h5v38h-5v-2l-15-4-1 3H16l-3-5-3-2z" fill="#ea5504" />
    </svg>
    <BannerText>科创涨幅居前，怎么选股？让收益率116%的大师</BannerText>
    <BannerRule />
    <svg width="34" height="34" viewBox="0 0 34 34"><path d="M2 2l30 30M32 2L2 32" stroke="#dd5a14" strokeWidth="3.200" /></svg>
  </Banner>
);

/* ---------- section tabs and cards ---------- */

const SectionTabs = styled.nav`
  flex: none;
  height: 106px;
  padding: 0 28px;
  display: grid;
  grid-template-columns: repeat(7, 1fr);
  border-top: 2px solid #dadada;
  border-bottom: 2px solid #dadada;
`;

const SectionTab = styled.div<{ $active?: boolean }>`
  display: flex;
  flex-direction: column;
  align-items: center;
  padding-top: 23px;
  font-size: 43.500px;
  line-height: 62px;
  -webkit-text-stroke: ${(p) => (p.$active ? `0.7px ${ORANGE}` : "0")};
  color: ${(p) => (p.$active ? ORANGE : GRAY)};
  &::after {
    content: "";
    width: 60px;
    height: 6px;
    margin-top: 4px;
    border-radius: 3px;
    background: ${(p) => (p.$active ? ORANGE : "transparent")};
  }
`;

const Cards = styled.section`
  flex: none;
  height: 156px;
  padding: 11px 29px 0 37px;
  display: grid;
  grid-template-columns: 1fr 1fr;
  gap: 18px;
  overflow: hidden;
`;

const Card = styled.article`
  position: relative;
  height: 180px;
  overflow: hidden;
  border-radius: 24px;
  background: #fffbf7;
`;

const CardArt = styled.svg`
  position: absolute;
  right: 0;
  top: 0;
`;

const CardHead = styled.div`
  position: relative;
  height: 58px;
  margin-top: 25px;
  padding-left: 23px;
  display: flex;
  align-items: center;
  gap: 14px;
  font-size: 41.500px;
  line-height: 54px;
  font-weight: 700;
  letter-spacing: -0.500px;
  color: #2b2b2b;
`;

const RankText = styled.p`
  position: relative;
  margin: 19px 0 0 23px;
  font-size: 36px;
  line-height: 44px;
  letter-spacing: 0.300px;
  color: ${GRAY};
`;

const Rank = styled.b`
  font-weight: 700;
  letter-spacing: 0.700px;
  color: #d9481c;
`;

const VoteBar = styled.div`
  position: relative;
  display: flex;
  gap: 4px;
  width: 450px;
  height: 96px;
  margin: 20px 0 0 25px;
  border: 4px solid #fff;
  border-radius: 48px;
  background: #fff;
  overflow: hidden;
`;

const Vote = styled.div<{ $up?: boolean }>`
  flex: 1;
  display: flex;
  flex-direction: ${(p) => (p.$up ? "row" : "row-reverse")};
  gap: 26px;
  padding: ${(p) => (p.$up ? "11px 0 0 18px" : "11px 16px 0 0")};
  font-size: 35px;
  line-height: 36px;
  -webkit-text-stroke: 0.500px currentColor;
  color: ${(p) => (p.$up ? "#d9481c" : "#32a852")};
  background: ${(p) => (p.$up ? "#fdd9d6" : "#d8f0e0")};
`;

const VoteDisc = styled.i`
  width: 68px;
  height: 68px;
  border-radius: 34px;
  background: #fff;
  display: flex;
  justify-content: center;
  padding-top: 25px;
`;

const CardRow = () => (
  <Cards>
    <Card>
      <CardArt width="300" height="160" viewBox="0 0 300 160">
        <path d="M48 30h42V0H300v160h-20L274 25H152v58H84v10H48z" fill="#fdf2f3" />
        <path d="M170 53h75l4 107h-24l-4-62-28 10v52h-24zM118 100h36l4 60h-38zM264 126h28l4 34h-32z" fill="#fdeced" />
      </CardArt>
      <CardHead>
        <svg width="48" height="48" viewBox="0 0 48 48">
          <defs><linearGradient id="badge" x1="0" y1="0" x2="0" y2="1"><stop offset="0" stopColor="#dc5350" /><stop offset="1" stopColor="#f3a6a3" /></linearGradient></defs>
          <circle cx="24" cy="24" r="24" fill="url(#badge)" />
          <path d="M10 20h6v16H9zM18 12h12l1 24H17zM32 25h6l1 11h-6z" fill="#fff" />
          <path d="M22 20l3-1.500V27" fill="none" stroke="#dc6663" strokeWidth="2" />
        </svg>
        人气榜
        <IconSlot $ml={1}>
          <svg width="14" height="24" viewBox="0 0 14 24"><path d="M1 1l11 11L1 23" fill="none" stroke="#b0a8a8" strokeWidth="2.500" /></svg>
        </IconSlot>
      </CardHead>
      <RankText>A股市场排名第<Rank>1343</Rank>名</RankText>
    </Card>
    <Card>
      <CardArt width="260" height="120" viewBox="0 0 260 120">
        <path d="M18 0H260V120H32z" fill="#fdf4f5" />
        <path d="M66 42h100l20 0 30-10 44 10v70h-30l-40-10-30 18H76z" fill="#fff8f6" />
        <path d="M88 52h24l6 68H94zM146 52h34l-34 68h-28zM252 60c-16-14-54-10-56 14-1 18 26 22 26 46h34c0-34-34-38-32-48 2-6 16-2 22 4z" fill="#feeff0" />
      </CardArt>
      <CardHead>
        <svg width="48" height="48" viewBox="0 0 48 48">
          <circle cx="24" cy="24" r="24" fill="url(#badge)" />
          <text x="8" y="33.500" fontFamily="Roboto, sans-serif" fontSize="28" fontWeight="700" fontStyle="italic" fill="#fff" textLength="31" lengthAdjust="spacingAndGlyphs">VS</text>
        </svg>
        多空看盘
      </CardHead>
      <VoteBar>
        <Vote $up>
          <VoteDisc><Triangle $w={20} $h={18} $color="#d9481c" $up /></VoteDisc>
          看涨
        </Vote>
        <Vote>
          <VoteDisc />
          看跌
        </Vote>
      </VoteBar>
    </Card>
  </Cards>
);

/* ---------- bottom bar ---------- */

const BottomBar = styled.footer`
  flex: none;
  height: 177px;
  display: flex;
  border-top: 2px solid #d3d6df;
  background: #f7faff;
`;

const IndexBlock = styled.div`
  width: 275px;
  padding-top: 9px;
  display: flex;
  flex-direction: column;
  align-items: center;
`;

const IndexPrice = styled.div`
  font-size: 40.500px;
  line-height: 68px;
  letter-spacing: -0.600px;
  padding-left: 1px;
  color: ${GREEN};
`;

const IndexRow = styled.div`
  align-self: stretch;
  display: flex;
  align-items: center;
  justify-content: space-between;
  margin-top: -7px;
  padding: 0 2px 0 41px;
`;

const Action = styled.div`
  width: 201.300px;
  padding-top: 10px;
  display: flex;
  flex-direction: column;
  align-items: center;
  gap: 14px;
  font-size: 35.300px;
  line-height: 50px;
  color: ${GRAY};
`;

const ICON = { width: 60, height: 58, viewBox: "0 0 60 58", fill: "none", stroke: "#626262", strokeWidth: 2.8 };

const Footer = () => (
  <BottomBar>
    <IndexBlock>
      <Triangle $w={22} $h={7} $color="#77757b" $up />
      <IndexPrice>3900.50</IndexPrice>
      <IndexRow>
        <Text $size={35.5} $color={GRAY}>上证</Text>
        <Text $size={37} $color={GREEN}><Dash>-</Dash>0.23%</Text>
      </IndexRow>
    </IndexBlock>
    <Action>
      <svg {...ICON} width="68" viewBox="-4 0 68 58">
        <path d="M13.700 6.700A28 28 0 0 1 55.500 42L62 38.500M47.700 51A28 28 0 0 1 7 15.500L-2 18.500" strokeLinejoin="round" />
        <path d="M21 16l9.500 10L40 16M30.500 26v18M20 27.500h21M20 36h21" />
      </svg>
      交易
    </Action>
    <Action>
      <svg {...ICON}>
        <path d="M42 2.500H8q-4 0-4 4v45q0 4 4 4h44q4 0 4-4V17" />
        <path d="M47 12L30 31l-8 9 3-12L41.500 8z" fill="#626262" strokeWidth="1" transform="translate(0 -1)" />
        <path d="M49 8l6-6.500" strokeWidth="6" />
      </svg>
      发帖
    </Action>
    <Action>
      <svg {...ICON}>
        <rect x="5" y="5" width="22" height="22" rx="3" />
        <rect x="5" y="33" width="22" height="22" rx="3" />
        <rect x="32" y="33" width="22" height="22" rx="3" />
        <path d="M43 3.500L55 16 43 28.500 31 16z" strokeLinejoin="round" />
      </svg>
      功能
    </Action>
    <Action>
      <svg {...ICON}>
        <circle cx="30" cy="29" r="26.500" />
        <g fill="#626262" stroke="none"><circle cx="18.500" cy="29" r="3" /><circle cx="30" cy="29" r="3" /><circle cx="41.500" cy="29" r="3" /></g>
      </svg>
      设自选
    </Action>
  </BottomBar>
);

const SECTIONS = ["股吧", "盘口", "资讯", "公告", "研报", "财务", "资料"];

export default function App() {
  return (
    <Page>
      <Global />
      <StatusRow />
      <TopHeader />
      <QuotePanel />
      <AfterHoursRow />
      <Periods />
      <MaLegend />
      <Charts />
      <BannerRow />
      <SectionTabs>
        {SECTIONS.map((s, i) => (
          <SectionTab key={s} $active={i === 0}>{s}</SectionTab>
        ))}
      </SectionTabs>
      <CardRow />
      <Footer />
    </Page>
  );
}
